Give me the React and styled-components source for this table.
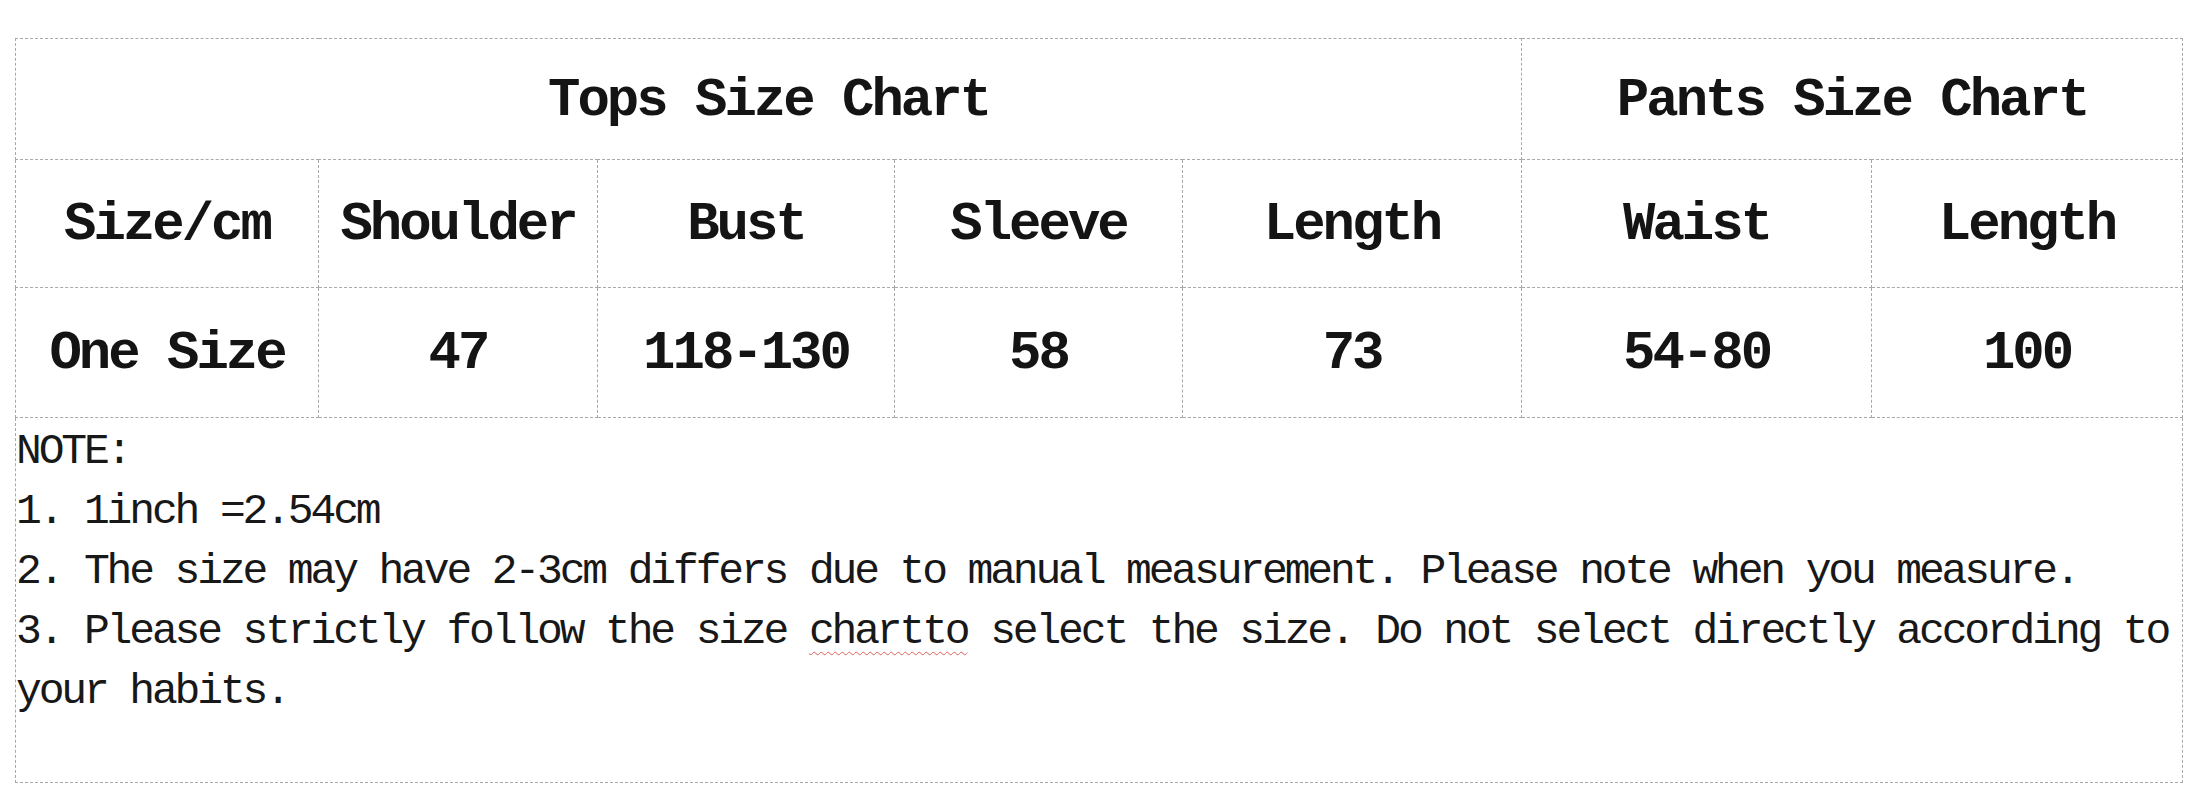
import styled, { createGlobalStyle } from 'styled-components'

const GlobalStyle = createGlobalStyle`
  html, body {
    margin: 0;
    background: #ffffff;
  }

  body {
    font-family: "Liberation Mono", "DejaVu Sans Mono", monospace;
    color: #141414;
  }
`

const Page = styled.main`
  padding: 38px 0 0 15px;
  width: 2168px;
`

const Chart = styled.table`
  width: 2168px;
  border-collapse: collapse;
  table-layout: fixed;
`

const Row = styled.tr`
  height: ${(p) => p.$height}px;
`

const Cell = styled.td`
  border: 1px dashed #a9a9a9;
  padding: 0;
  text-align: center;
  vertical-align: middle;
  white-space: nowrap;
  font-size: 54px;
  font-weight: 700;
  letter-spacing: -3px;
  padding-top: 2px;
`

const Note = styled.section`
  box-sizing: border-box;
  height: 365px;
  padding-top: 4px;
  border: 1px dashed #a9a9a9;
  border-top: none;
  font-size: 43px;
  line-height: 60px;
  letter-spacing: -3.15px;
  color: #181818;
`

const NoteLine = styled.p`
  margin: 0;
`

const Misspelt = styled.span`
  text-decoration: underline wavy #e06060;
  text-decoration-thickness: 1px;
  text-underline-offset: 8px;
`

const COLUMNS = [303, 279, 297, 288, 339, 350, 311]

const HEADINGS = ['Size/cm', 'Shoulder', 'Bust', 'Sleeve', 'Length', 'Waist', 'Length']
const VALUES = ['One Size', '47', '118-130', '58', '73', '54-80', '100']

const SizeChart = () => (
  <Chart>
    <colgroup>
      {COLUMNS.map((w, i) => <col key={i} style={{ width: w }} />)}
    </colgroup>
    <tbody>
      <Row $height={121}>
        <Cell colSpan={5}>Tops Size Chart</Cell>
        <Cell colSpan={2}>Pants Size Chart</Cell>
      </Row>
      <Row $height={128}>
        {HEADINGS.map((text, i) => <Cell key={i}>{text}</Cell>)}
      </Row>
      <Row $height={130}>
        {VALUES.map((text, i) => <Cell key={i}>{text}</Cell>)}
      </Row>
    </tbody>
  </Chart>
)

export default function App() {
  return (
    <>
      <GlobalStyle />
      <Page>
        <SizeChart />
        <Note>
          <NoteLine>NOTE:</NoteLine>
          <NoteLine>1. 1inch =2.54cm</NoteLine>
          <NoteLine>2. The size may have 2-3cm differs due to manual measurement. Please note when you measure.</NoteLine>
          <NoteLine>
            3. Please strictly follow the size <Misspelt>chartto</Misspelt> select the size. Do not select directly according to your habits.
          </NoteLine>
        </Note>
      </Page>
    </>
  )
}
